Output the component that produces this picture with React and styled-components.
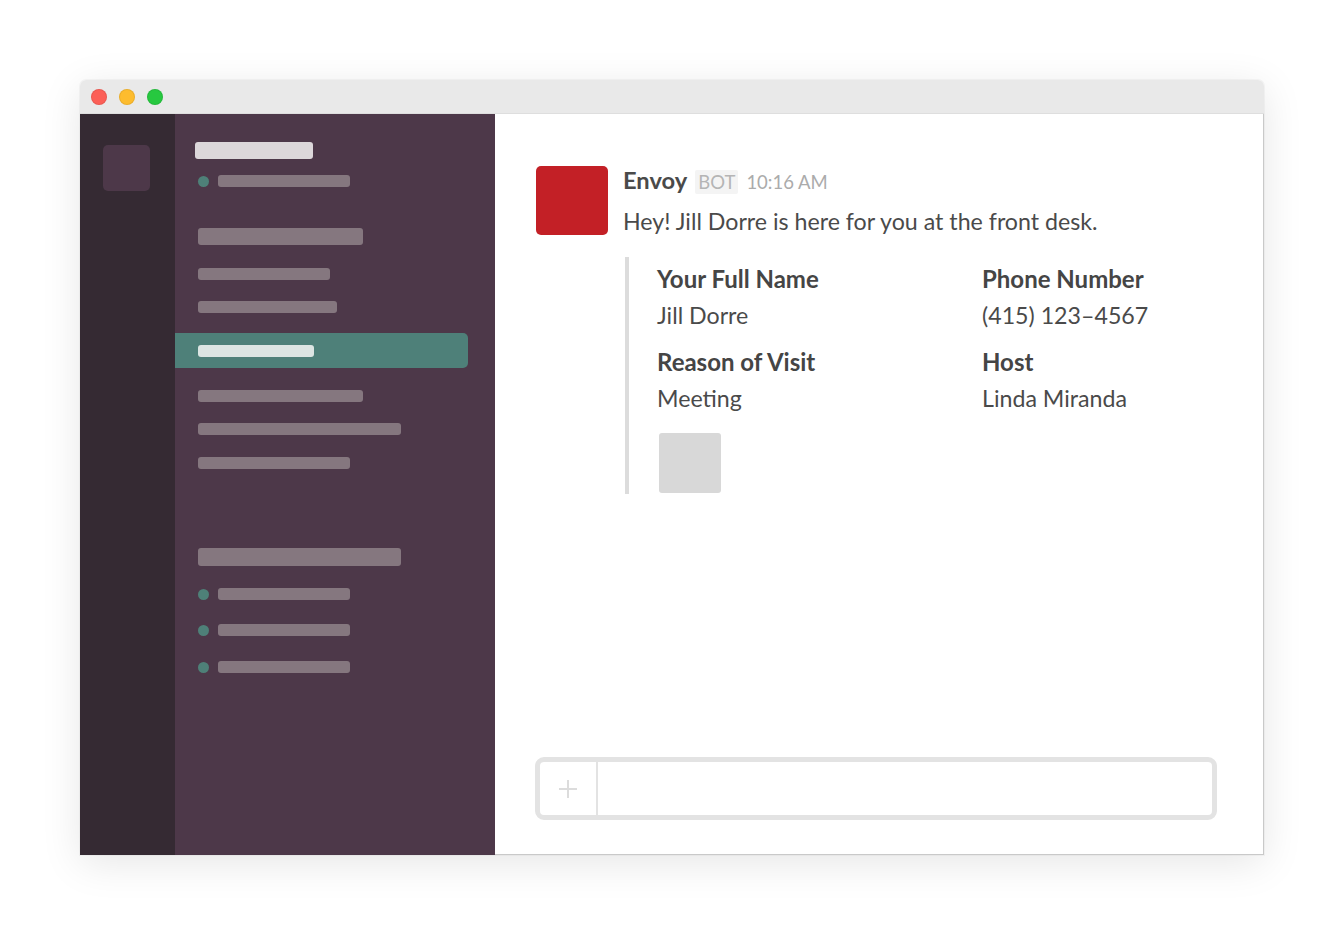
import React from "react";
import styled, { createGlobalStyle } from "styled-components";

const GlobalStyle = createGlobalStyle`
  html, body { margin: 0; padding: 0; background: #ffffff; }
  body { font-family: Lato, "Open Sans", sans-serif; }
`;

const Page = styled.div`
  width: 1344px;
  height: 935px;
  padding: 80px;
  box-sizing: border-box;
`;

const Window = styled.div`
  width: 1184px;
  height: 775px;
  display: flex;
  flex-direction: column;
  border-radius: 6px 6px 0 0;
  overflow: hidden;
  background: #fff;
  box-shadow: 0 8px 40px rgba(0, 0, 0, 0.1), 0 0 0 1px rgba(0, 0, 0, 0.03);
`;

const TitleBar = styled.div`
  height: 34px;
  flex: none;
  background: #e9e9e9;
  border-bottom: 1px solid #dedede;
  box-sizing: border-box;
  display: flex;
  align-items: center;
  gap: 12px;
  padding-left: 11px;
`;

const Light = styled.span`
  width: 16px;
  height: 16px;
  border-radius: 50%;
  background: ${({ color }) => color};
  box-shadow: inset 0 0 0 1px rgba(0, 0, 0, 0.08);
`;

const Body = styled.div`
  flex: 1;
  display: flex;
  min-height: 0;
`;

const Rail = styled.div`
  width: 95px;
  flex: none;
  background: #352a33;
  padding: 31px 0 0 23px;
  box-sizing: border-box;
`;

const TeamIcon = styled.div`
  width: 47px;
  height: 46px;
  border-radius: 5px;
  background: #4d3849;
`;

const Channels = styled.div`
  width: 320px;
  flex: none;
  background: #4d3849;
  display: flex;
  flex-direction: column;
  padding: 28px 27px 0 0;
  box-sizing: border-box;
`;

const Row = styled.div`
  display: flex;
  align-items: center;
  gap: 9px;
  margin-top: ${({ top }) => top}px;
  padding-left: ${({ indent }) => indent ?? 23}px;
`;

const ActiveRow = styled(Row)`
  height: 35px;
  background: #4e8079;
  border-radius: 0 5px 5px 0;
`;

const Bar = styled.div`
  width: ${({ w }) => w}px;
  height: ${({ h }) => h || 12}px;
  border-radius: 3px;
  background: ${({ light, active }) =>
    active ? "#dce5e3" : light ? "#dcd7da" : "#85777f"};
`;

const Dot = styled.span`
  width: 11px;
  height: 11px;
  border-radius: 50%;
  background: #4e8078;
`;

const Main = styled.div`
  flex: 1;
  min-width: 0;
  display: flex;
  flex-direction: column;
  justify-content: space-between;
  border-right: 1px solid #c9c9c9;
  border-bottom: 1px solid #c9c9c9;
  padding: 52px 46px 34px 41px;
  box-sizing: border-box;
  color: #4a4a4a;
`;

const Message = styled.div`
  display: flex;
  gap: 15px;
`;

const Avatar = styled.div`
  width: 72px;
  height: 69px;
  border-radius: 5px;
  background: #c32026;
  flex: none;
`;

const MessageBody = styled.div`
  flex: 1;
  display: flex;
  flex-direction: column;
`;

const Header = styled.div`
  display: flex;
  align-items: baseline;
  gap: 8px;
  height: 30px;
`;

const Sender = styled.span`
  font-weight: 700;
  font-size: 23.7px;
  color: #4a4a4a;
`;

const Badge = styled.span`
  background: #f4f4f4;
  color: #b5b5b5;
  font-size: 18.5px;
  padding: 1px 3px;
  border-radius: 2px;
`;

const Time = styled.span`
  color: #ababab;
  font-size: 18.5px;
`;

const Text = styled.div`
  font-size: 23.2px;
  line-height: 30px;
  margin-top: 10px;
`;

const Attachment = styled.div`
  margin-top: 21px;
  margin-left: 2px;
  border-left: 4px solid #dcdcdc;
  padding: 4px 0 0 28px;
  height: 237px;
  box-sizing: border-box;
`;

const Fields = styled.div`
  display: grid;
  grid-template-columns: 325px 1fr;
  row-gap: 11px;
`;

const Field = styled.div`
  display: flex;
  flex-direction: column;
`;

const FieldTitle = styled.div`
  font-weight: 700;
  font-size: 24px;
  line-height: 36px;
  color: #454545;
`;

const FieldValue = styled.div`
  font-size: 23.2px;
  line-height: 36px;
`;

const Thumb = styled.div`
  width: 62px;
  height: 60px;
  margin: 17px 0 0 2px;
  border-radius: 3px;
  background: #d8d8d8;
`;

const Composer = styled.div`
  height: 63px;
  border: 5px solid #e3e3e3;
  border-radius: 9px;
  box-sizing: border-box;
  display: flex;
  margin-left: -1px;
`;

const PlusBox = styled.div`
  width: 56px;
  border-right: 2px solid #e3e3e3;
  display: flex;
  align-items: center;
  justify-content: center;
`;

const channelItems = [
  { kind: "header", w: 118, h: 17, top: 0 },
  { kind: "dot", w: 132, top: 16 },
  { kind: "bar", w: 165, h: 17, top: 41 },
  { kind: "bar", w: 132, top: 23 },
  { kind: "bar", w: 139, top: 21 },
  { kind: "active", w: 116, top: 20 },
  { kind: "bar", w: 165, top: 22 },
  { kind: "bar", w: 203, top: 21 },
  { kind: "bar", w: 152, top: 22 },
  { kind: "bar", w: 203, h: 18, top: 79 },
  { kind: "dot", w: 132, top: 22 },
  { kind: "dot", w: 132, top: 24 },
  { kind: "dot", w: 132, top: 25 },
];

function ChannelItem({ item }) {
  if (item.kind === "header")
    return (
      <Row top={item.top} indent={20}>
        <Bar w={item.w} h={item.h} light />
      </Row>
    );
  if (item.kind === "active")
    return (
      <ActiveRow top={item.top}>
        <Bar w={item.w} active />
      </ActiveRow>
    );
  if (item.kind === "dot")
    return (
      <Row top={item.top}>
        <Dot />
        <Bar w={item.w} />
      </Row>
    );
  return (
    <Row top={item.top}>
      <Bar w={item.w} h={item.h} />
    </Row>
  );
}

const fields = [
  ["Your Full Name", "Jill Dorre"],
  ["Phone Number", "(415) 123–4567"],
  ["Reason of Visit", "Meeting"],
  ["Host", "Linda Miranda"],
];

export default function App() {
  return (
    <>
      <GlobalStyle />
      <Page>
        <Window>
          <TitleBar>
            <Light color="#fc5f57" />
            <Light color="#fdbc2e" />
            <Light color="#27c840" />
          </TitleBar>
          <Body>
            <Rail>
              <TeamIcon />
            </Rail>
            <Channels>
              {channelItems.map((item, i) => (
                <ChannelItem key={i} item={item} />
              ))}
            </Channels>
            <Main>
              <Message>
                <Avatar />
                <MessageBody>
                  <Header>
                    <Sender>Envoy</Sender>
                    <Badge>BOT</Badge>
                    <Time>10:16 AM</Time>
                  </Header>
                  <Text>Hey! Jill Dorre is here for you at the front desk.</Text>
                  <Attachment>
                    <Fields>
                      {fields.map(([t, v]) => (
                        <Field key={t}>
                          <FieldTitle>{t}</FieldTitle>
                          <FieldValue>{v}</FieldValue>
                        </Field>
                      ))}
                    </Fields>
                    <Thumb />
                  </Attachment>
                </MessageBody>
              </Message>
              <Composer>
                <PlusBox>
                  <svg width="22" height="22" viewBox="0 0 22 22">
                    <path d="M11 2v18M2 11h18" stroke="#dcdcdc" strokeWidth="2" />
                  </svg>
                </PlusBox>
              </Composer>
            </Main>
          </Body>
        </Window>
      </Page>
    </>
  );
}
